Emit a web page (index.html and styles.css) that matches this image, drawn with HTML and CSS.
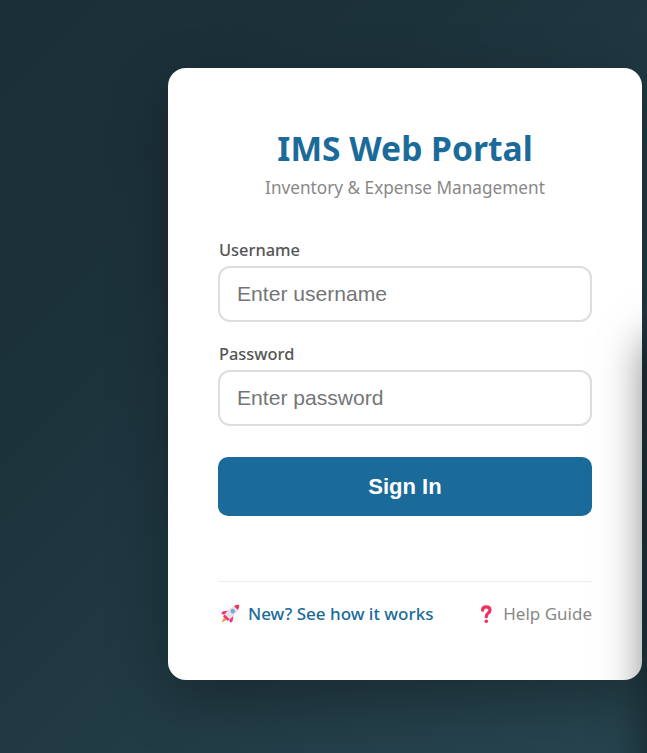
FILE: index.html
```html
<!DOCTYPE html>
<html lang="en">

<head>
    <meta charset="UTF-8">
    <meta name="viewport" content="width=device-width, initial-scale=1.0">
    <title>IMS Web Portal</title>
    <link rel="stylesheet" href="styles.css">
</head>

<body>
    <div class="login-card">
        <h1 class="title">IMS Web Portal</h1>
        <p class="subtitle">Inventory &amp; Expense Management</p>

        <form class="login-form">
            <div class="field">
                <label for="username">Username</label>
                <input id="username" type="text" placeholder="Enter username">
            </div>
            <div class="field">
                <label for="password">Password</label>
                <input id="password" type="password" placeholder="Enter password">
            </div>
            <button type="button" class="sign-in">Sign In</button>
        </form>

        <div class="card-footer">
            <a href="#" class="link-new">
                <svg class="icon-rocket" viewBox="0 0 20 20" width="20" height="20" aria-hidden="true">
                    <g transform="rotate(45 10 10)">
                        <path d="M8.2 16.5 H11.8 L10 22 Z" fill="#f7941d" />
                        <path d="M6.6 8.5 L3 13.5 L3.6 16 L7 14.5 Z" fill="#ee2f7b" />
                        <path d="M13.4 8.5 L17 13.5 L16.4 16 L13 14.5 Z" fill="#ee2f7b" />
                        <path d="M10 -3 C13.4 0 14.6 6 13.4 16.5 H6.6 C5.4 6 6.6 0 10 -3 Z" fill="#e6e1e8" />
                        <path d="M10 -3 C11.3 -1.8 12.2 -0.2 12.8 1.6 H7.2 C7.8 -0.2 8.7 -1.8 10 -3 Z" fill="#ee2f5b" />
                        <path d="M6.9 14 H13.1 L13.4 16.5 H6.6 Z" fill="#ee2f7b" />
                        <circle cx="10" cy="6" r="2.3" fill="#7fa6d9" />
                    </g>
                </svg>
                New? See how it works
            </a>
            <a href="#" class="link-help">
                <svg class="icon-question" viewBox="0 0 14 20" width="14" height="20" aria-hidden="true">
                    <path d="M3.6 6.2 C3.6 3.8 5 2.8 7.2 2.8 C9.5 2.8 11 4 11 6 C11 7.8 10 8.6 8.8 9.5 C7.8 10.3 7.3 11 7.3 12.8" fill="none" stroke="#f0305f" stroke-width="3.2" stroke-linecap="round" />
                    <circle cx="7.3" cy="17.2" r="1.8" fill="#f0305f" />
                </svg>
                Help Guide
            </a>
        </div>
    </div>

    <div class="side-panel"></div>
</body>

</html>
```

FILE: styles.css
```css
* {
    box-sizing: border-box;
}

html,
body {
    height: 100%;
}

body {
    margin: 0;
    padding: 68px 0 0 168px;
    overflow: hidden;
    font-family: "Noto Sans", "Open Sans", sans-serif;
    background: linear-gradient(135deg, #1a2f38 0%, #1c323b 30%, #284650 100%);
}

.login-card {
    width: 474px;
    height: 612px;
    padding: 58px 50px 0;
    background-color: #fff;
    border-radius: 18px;
    box-shadow: 0 20px 60px rgba(0, 0, 0, 0.3);
}

.title {
    margin: 0;
    font-size: 33.6px;
    line-height: 44px;
    font-weight: 700;
    text-align: center;
    color: #1a6b9a;
}

.subtitle {
    margin: 6px 0 0;
    font-size: 17.2px;
    line-height: 24px;
    text-align: center;
    color: #888;
}

.login-form {
    margin-top: 38px;
}

.field {
    margin-bottom: 20px;
}

.field label {
    display: block;
    margin-bottom: 4px;
    padding-left: 1px;
    font-size: 16.4px;
    line-height: 24px;
    font-weight: 500;
    color: #555;
}

.field input {
    display: block;
    width: 100%;
    height: 56px;
    padding: 0 17px;
    border: 2px solid #ddd;
    border-radius: 12px;
    font-family: "Liberation Sans", Arial, sans-serif;
    font-size: 21.1px;
    color: #333;
    background-color: #fff;
}

.sign-in {
    display: block;
    width: 100%;
    height: 59px;
    margin-top: 31px;
    border: none;
    border-radius: 10px;
    font-family: "Liberation Sans", Arial, sans-serif;
    font-size: 22px;
    font-weight: 700;
    color: #fff;
    background-color: #1a6b9a;
}

.card-footer {
    display: flex;
    justify-content: space-between;
    align-items: center;
    margin-top: 65px;
    padding-top: 20px;
    border-top: 1px solid #eee;
}

.card-footer a {
    display: flex;
    align-items: center;
    line-height: 24px;
    text-decoration: none;
}

.link-new {
    font-size: 17px;
    color: #1a6b9a;
    font-weight: 500;
}

.link-help {
    font-size: 17px;
    color: #888;
}

.icon-rocket {
    margin: 0 8px 0 2px;
}

.icon-question {
    margin-right: 10px;
}

/* panel sitting off the right edge, only its shadow shows */
.side-panel {
    position: fixed;
    top: 340px;
    left: 655px;
    width: 300px;
    height: 800px;
    background-color: #fff;
    box-shadow: -10px 0 40px rgba(0, 0, 0, 0.5);
}
```
